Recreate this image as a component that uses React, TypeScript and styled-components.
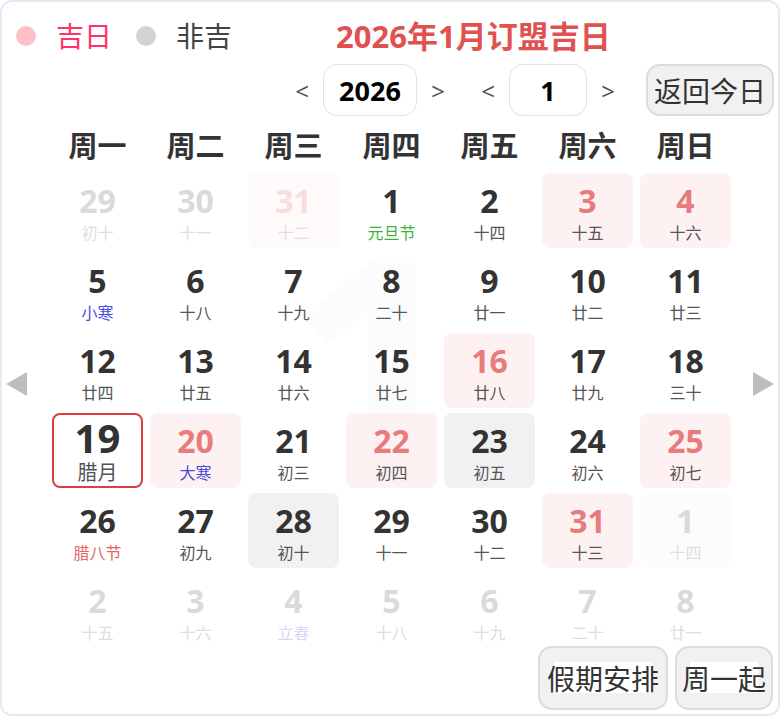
import React from "react";
import styled, { createGlobalStyle } from "styled-components";

const Global = createGlobalStyle`
  html, body { margin: 0; padding: 0; background: #ffffff; }
  body { font-family: "Noto Sans", "Noto Sans CJK SC", sans-serif; }
  * { box-sizing: border-box; }
`;

const Card = styled.div`
  width: 780px;
  height: 716px;
  border: 2px solid #e6e9f4;
  border-radius: 12px;
  background: #fff;
  padding: 14px 0 0 0;
  overflow: hidden;
`;

const Header = styled.div`
  display: flex;
  align-items: center;
  height: 40px;
  padding-left: 14px;
`;

const Dot = styled.span<{ $color: string }>`
  width: 20px;
  height: 20px;
  border-radius: 50%;
  background: ${(p) => p.$color};
  margin-right: 20px;
  flex: none;
`;

const LegendLabel = styled.span<{ $color: string; $gap: number }>`
  font-size: 28px;
  line-height: 40px;
  color: ${(p) => p.$color};
  margin-right: ${(p) => p.$gap}px;
`;

const Title = styled.h1`
  margin: 0 0 0 104px;
  font-size: 31px;
  line-height: 40px;
  font-weight: 700;
  color: #e05252;
`;

const NavRow = styled.div`
  display: flex;
  justify-content: flex-end;
  align-items: center;
  height: 52px;
  margin-top: 8px;
  padding-right: 4px;
  gap: 26px;
`;

const NavGroup = styled.div`
  display: flex;
  align-items: center;
  gap: 9px;
`;

const NavArrow = styled.span`
  width: 24px;
  text-align: center;
  font-size: 24px;
  color: #555;
  cursor: pointer;
`;

const ValueBox = styled.div<{ $w: number }>`
  width: ${(p) => p.$w}px;
  height: 52px;
  border: 1.5px solid #e2e2e2;
  border-radius: 14px;
  display: flex;
  align-items: center;
  justify-content: center;
  font-size: 27px;
  font-weight: 700;
  color: #000;
`;

const GreyButton = styled.button<{ $w: number; $h: number; $hl?: number }>`
  width: ${(p) => p.$w}px;
  height: ${(p) => p.$h}px;
  border: 2px solid #dcdcdc;
  border-radius: 14px;
  background: ${(p) =>
    p.$hl
      ? `linear-gradient(#fff, #fff) center 14px / ${p.$hl}px 31px no-repeat, #f1f1f1`
      : "#f1f1f1"};
  font-family: "Noto Sans", "Noto Sans CJK SC", sans-serif;
  font-size: 28px;
  color: #333;
  padding: 0;
  display: flex;
  align-items: center;
  justify-content: center;
  cursor: pointer;
`;

const Body = styled.div`
  display: flex;
  align-items: center;
  margin-top: 4px;
`;

const SideArrow = styled.div<{ $dir: "left" | "right" }>`
  width: 0;
  height: 0;
  border-top: 12px solid transparent;
  border-bottom: 12px solid transparent;
  ${(p) =>
    p.$dir === "left"
      ? "border-right: 21px solid #bdbdbd; margin: 0 25px 0 4px;"
      : "border-left: 21px solid #bdbdbd; margin: 0 0 0 22px;"}
  flex: none;
`;

const Main = styled.div`
  width: 679px;
  flex: none;
`;

const WeekRow = styled.div`
  display: grid;
  grid-template-columns: repeat(7, 91px);
  column-gap: 7px;
  height: 53px;
  padding-bottom: 6px;
  align-items: center;
`;

const WeekName = styled.div`
  text-align: center;
  font-size: 29px;
  font-weight: 700;
  color: #333;
`;

const Grid = styled.div`
  position: relative;
  display: grid;
  grid-template-columns: repeat(7, 91px);
  grid-auto-rows: 75px;
  column-gap: 7px;
  row-gap: 5px;
`;

const Watermark = styled.div`
  position: absolute;
  left: 232px;
  top: 29px;
  font-size: 320px;
  line-height: 1;
  font-weight: 700;
  color: rgba(0, 0, 0, 0.012);
  pointer-events: none;
  z-index: 0;
`;

const Cell = styled.div<{ $bg: string; $today?: boolean }>`
  position: relative;
  z-index: 1;
  display: flex;
  flex-direction: column;
  align-items: center;
  border-radius: 8px;
  background: ${(p) => p.$bg};
  padding-top: ${(p) => (p.$today ? 2 : 10)}px;
  border: ${(p) => (p.$today ? "2px solid #d94040" : "none")};
`;

const DayNum = styled.div<{ $color: string; $today?: boolean }>`
  font-size: ${(p) => (p.$today ? 40 : 32)}px;
  line-height: ${(p) => (p.$today ? 42 : 36)}px;
  font-weight: 700;
  color: ${(p) => p.$color};
`;

const Lunar = styled.div<{ $color: string; $today?: boolean }>`
  font-size: ${(p) => (p.$today ? 20 : 16)}px;
  line-height: ${(p) => (p.$today ? 24 : 22)}px;
  margin-top: ${(p) => (p.$today ? 2 : 3)}px;
  color: ${(p) => p.$color};
`;

const Footer = styled.div`
  display: flex;
  justify-content: flex-end;
  gap: 7px;
  margin-top: -2px;
  padding-right: 5px;
`;

type Kind = "normal" | "pink" | "gray" | "faded" | "fadedPink" | "fadedBg" | "today";
type LC = "green" | "blue" | "red" | "fadedBlue" | undefined;

interface Day {
  d: number;
  l: string;
  k?: Kind;
  c?: LC;
}

const days: Day[] = [
  { d: 29, l: "初十", k: "faded" },
  { d: 30, l: "十一", k: "faded" },
  { d: 31, l: "十二", k: "fadedPink" },
  { d: 1, l: "元旦节", c: "green" },
  { d: 2, l: "十四" },
  { d: 3, l: "十五", k: "pink" },
  { d: 4, l: "十六", k: "pink" },
  { d: 5, l: "小寒", c: "blue" },
  { d: 6, l: "十八" },
  { d: 7, l: "十九" },
  { d: 8, l: "二十" },
  { d: 9, l: "廿一" },
  { d: 10, l: "廿二" },
  { d: 11, l: "廿三" },
  { d: 12, l: "廿四" },
  { d: 13, l: "廿五" },
  { d: 14, l: "廿六" },
  { d: 15, l: "廿七" },
  { d: 16, l: "廿八", k: "pink" },
  { d: 17, l: "廿九" },
  { d: 18, l: "三十" },
  { d: 19, l: "腊月", k: "today" },
  { d: 20, l: "大寒", k: "pink", c: "blue" },
  { d: 21, l: "初三" },
  { d: 22, l: "初四", k: "pink" },
  { d: 23, l: "初五", k: "gray" },
  { d: 24, l: "初六" },
  { d: 25, l: "初七", k: "pink" },
  { d: 26, l: "腊八节", c: "red" },
  { d: 27, l: "初九" },
  { d: 28, l: "初十", k: "gray" },
  { d: 29, l: "十一" },
  { d: 30, l: "十二" },
  { d: 31, l: "十三", k: "pink" },
  { d: 1, l: "十四", k: "fadedBg" },
  { d: 2, l: "十五", k: "faded" },
  { d: 3, l: "十六", k: "faded" },
  { d: 4, l: "立春", k: "faded", c: "fadedBlue" },
  { d: 5, l: "十八", k: "faded" },
  { d: 6, l: "十九", k: "faded" },
  { d: 7, l: "二十", k: "faded" },
  { d: 8, l: "廿一", k: "faded" },
];

const bgOf: Record<Kind, string> = {
  normal: "transparent",
  pink: "#fdf2f1",
  gray: "#f1f1f1",
  faded: "transparent",
  fadedPink: "#fefaf9",
  fadedBg: "#fcfcfc",
  today: "#fff",
};

const numColor: Record<Kind, string> = {
  normal: "#333",
  pink: "#e87b7b",
  gray: "#333",
  faded: "#dadada",
  fadedPink: "#f9dcdd",
  fadedBg: "#dadada",
  today: "#333",
};

const lunarColor = (k: Kind, c: LC): string => {
  if (c === "green") return "#3db33d";
  if (c === "blue") return "#4a4ae0";
  if (c === "red") return "#e86464";
  if (c === "fadedBlue") return "#dcd6fa";
  if (k === "faded" || k === "fadedPink" || k === "fadedBg") return "#dedede";
  return "#555";
};

const weekNames = ["周一", "周二", "周三", "周四", "周五", "周六", "周日"];

export default function App() {
  return (
    <>
      <Global />
      <Card>
        <Header>
          <Dot $color="#ffc0cb" />
          <LegendLabel $color="#ff3366" $gap={24}>吉日</LegendLabel>
          <Dot $color="#d3d3d3" />
          <LegendLabel $color="#444" $gap={0}>非吉</LegendLabel>
          <Title>2026年1月订盟吉日</Title>
        </Header>
        <NavRow>
          <NavGroup>
            <NavArrow>&lt;</NavArrow>
            <ValueBox $w={94}>2026</ValueBox>
            <NavArrow>&gt;</NavArrow>
          </NavGroup>
          <NavGroup>
            <NavArrow>&lt;</NavArrow>
            <ValueBox $w={78}>1</ValueBox>
            <NavArrow>&gt;</NavArrow>
          </NavGroup>
          <GreyButton $w={128} $h={52}>返回今日</GreyButton>
        </NavRow>
        <Body>
          <SideArrow $dir="left" />
          <Main>
            <WeekRow>
              {weekNames.map((w) => (
                <WeekName key={w}>{w}</WeekName>
              ))}
            </WeekRow>
            <Grid>
              <Watermark>1</Watermark>
              {days.map((day, i) => {
                const k: Kind = day.k ?? "normal";
                const today = k === "today";
                return (
                  <Cell key={i} $bg={bgOf[k]} $today={today}>
                    <DayNum $color={numColor[k]} $today={today}>{day.d}</DayNum>
                    <Lunar $color={lunarColor(k, day.c)} $today={today}>{day.l}</Lunar>
                  </Cell>
                );
              })}
            </Grid>
          </Main>
          <SideArrow $dir="right" />
        </Body>
        <Footer>
          <GreyButton $w={130} $h={64} $hl={98}>假期安排</GreyButton>
          <GreyButton $w={98} $h={64} $hl={68}>周一起</GreyButton>
        </Footer>
      </Card>
    </>
  );
}
